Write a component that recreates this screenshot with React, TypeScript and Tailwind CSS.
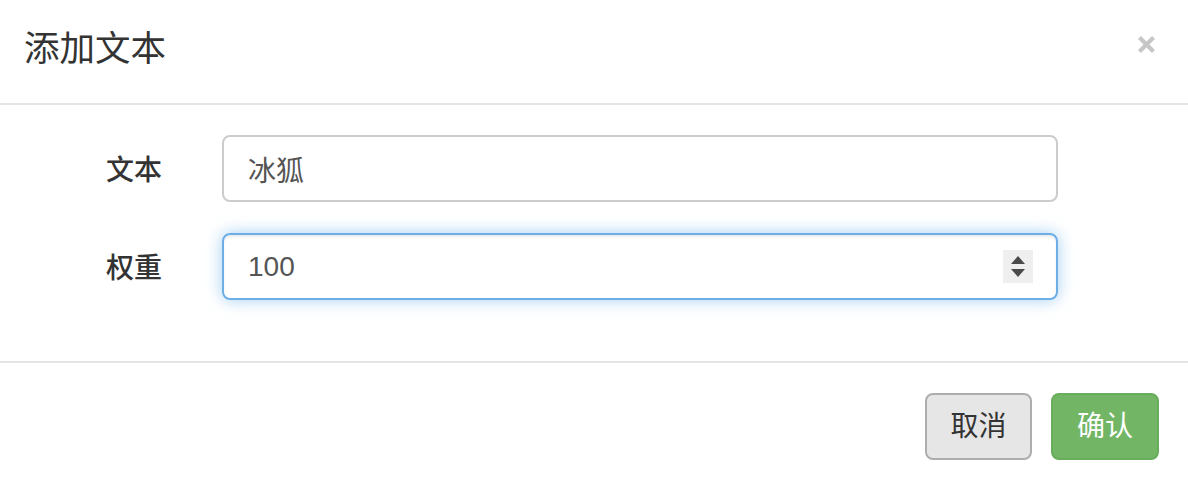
import React, { useState } from "react";

const font = { fontFamily: '"Liberation Sans", "Noto Sans CJK SC", sans-serif' };

const App = () => {
  const [text, setText] = useState("冰狐");
  const [weight, setWeight] = useState("100");

  return (
    <div className="w-[1188px] h-[488px] bg-white overflow-hidden text-[#333]" style={font}>
      {/* header */}
      <div className="h-[105px] flex items-start justify-between pl-[24px] pr-[32px] border-b-2 border-[#e5e5e5]">
        <h4 className="mt-[23px] text-[35.5px] leading-[52px] font-normal">添加文本</h4>
        <button className="mt-[35px] w-[19px] h-[19px]">
          <svg viewBox="0 0 19 19" className="w-[19px] h-[19px]">
            <path d="M2.5 2.5 L16.5 16.5 M16.5 2.5 L2.5 16.5" stroke="#c6c6c6" strokeWidth="4.2" />
          </svg>
        </button>
      </div>

      {/* body */}
      <div className="h-[258px] pt-[30px] border-b-2 border-[#e5e5e5]">
        <div className="flex items-center h-[67px]">
          <label className="w-[162px] mt-[4px] text-right text-[28px] font-medium">文本</label>
          <input
            value={text}
            onChange={(e) => setText(e.target.value)}
            className="ml-[60px] w-[836px] h-[67px] px-[24px] text-[28px] text-[#555] border-2 border-[#cccccc] rounded-[8px] outline-none"
            style={font}
          />
        </div>
        <div className="flex items-center h-[67px] mt-[31px]">
          <label className="w-[162px] mt-[4px] text-right text-[28px] font-medium">权重</label>
          <div className="relative ml-[60px] w-[836px] h-[67px]">
            <input
              value={weight}
              onChange={(e) => setWeight(e.target.value)}
              className="w-full h-full px-[24px] text-[28px] text-[#555] border-2 border-[#6eaee6] rounded-[8px] outline-none shadow-[inset_0_2px_2px_rgba(0,0,0,0.075),0_0_16px_rgba(102,175,233,0.6)]"
              style={font}
            />
            <div className="absolute right-[25px] top-[17px] w-[30px] h-[33px] bg-[#efefef] flex flex-col items-center justify-center gap-[5px]">
              <div className="w-0 h-0 border-l-[7px] border-r-[7px] border-b-[8px] border-l-transparent border-r-transparent border-b-[#4a4a4a]" />
              <div className="w-0 h-0 border-l-[7px] border-r-[7px] border-t-[8px] border-l-transparent border-r-transparent border-t-[#4a4a4a]" />
            </div>
          </div>
        </div>
      </div>

      {/* footer */}
      <div className="flex justify-end gap-[19px] pt-[30px] pr-[29px]">
        <button className="w-[107px] h-[67px] text-[28px] text-[#333] bg-[#e6e6e6] border-2 border-[#adadad] rounded-[8px]" style={font}>
          取消
        </button>
        <button className="w-[108px] h-[67px] text-[28px] text-white bg-[#71b565] border-2 border-[#68ad5c] rounded-[8px]" style={font}>
          确认
        </button>
      </div>
    </div>
  );
};

export default App;
